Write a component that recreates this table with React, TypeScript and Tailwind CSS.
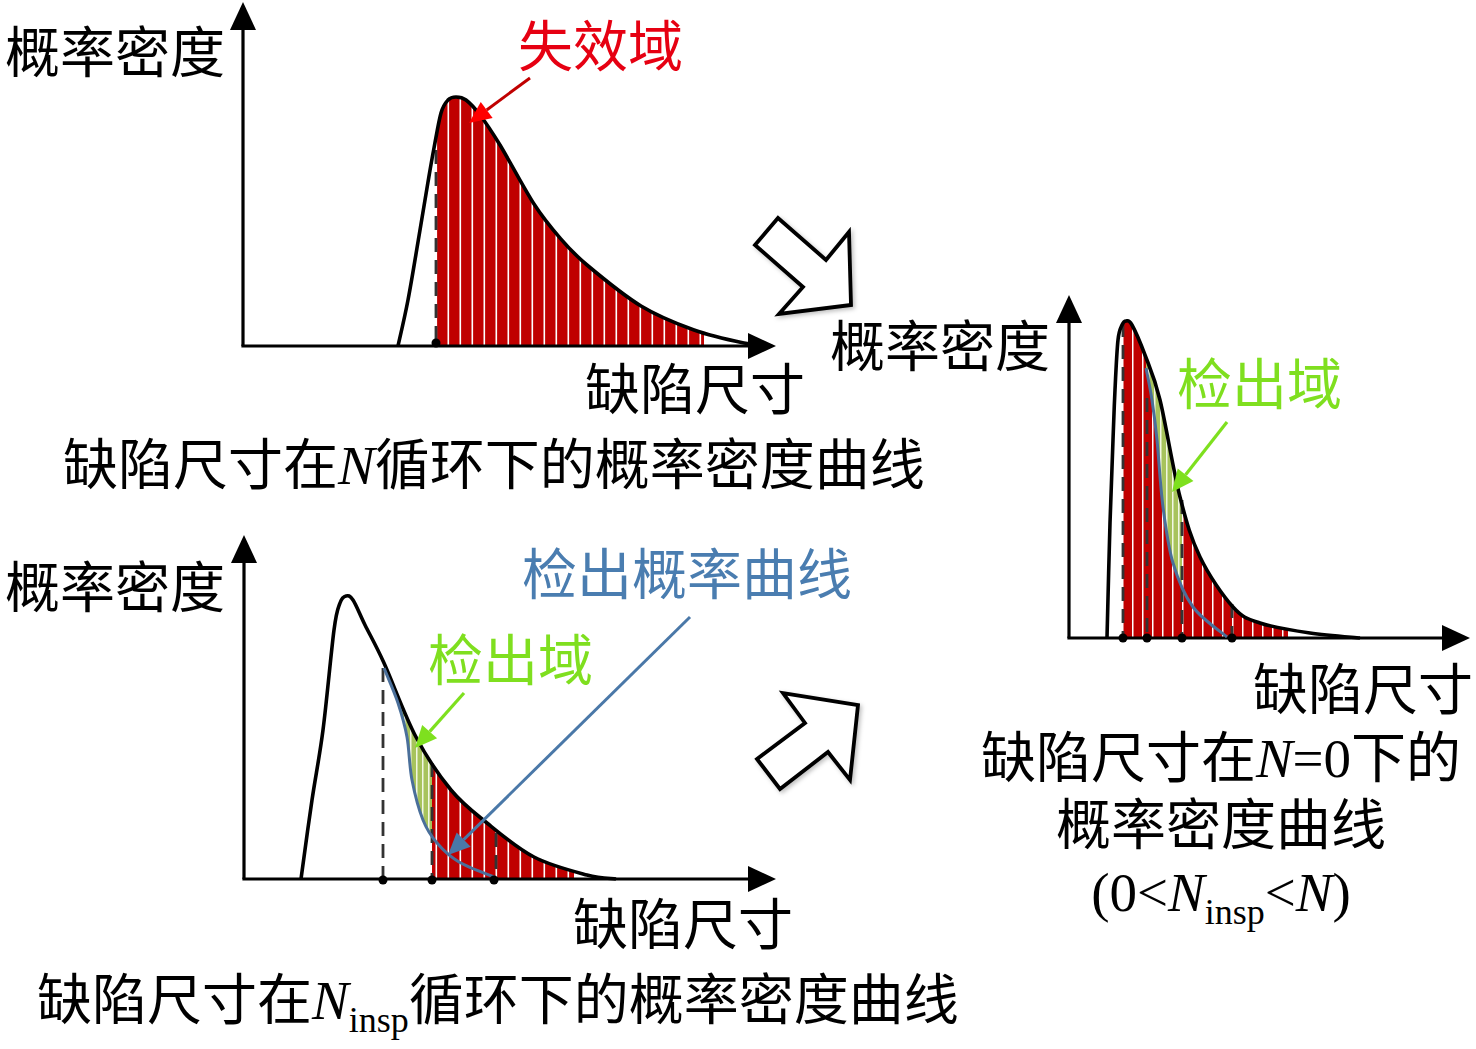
import type { ReactNode } from 'react';

type Pt = [number, number];

// catmull-rom -> cubic bezier
function smooth(pts: Pt[]) {
    let d = `M${pts[0][0]},${pts[0][1]}`;
    for (let i = 0; i < pts.length - 1; i++) {
        const p0 = pts[i - 1] || pts[i];
        const p1 = pts[i];
        const p2 = pts[i + 1];
        const p3 = pts[i + 2] || p2;
        const c1x = p1[0] + (p2[0] - p0[0]) / 6;
        const c1y = p1[1] + (p2[1] - p0[1]) / 6;
        const c2x = p2[0] - (p3[0] - p1[0]) / 6;
        const c2y = p2[1] - (p3[1] - p1[1]) / 6;
        d += ` C${c1x.toFixed(1)},${c1y.toFixed(1)} ${c2x.toFixed(1)},${c2y.toFixed(1)} ${p2[0]},${p2[1]}`;
    }
    return d;
}

function area(pts: Pt[], axisY: number) {
    const last = pts[pts.length - 1];
    return `${smooth(pts)} L${last[0]},${axisY} L${pts[0][0]},${axisY} Z`;
}

function aboveCurve(pts: Pt[], right: number, top: number) {
    const last = pts[pts.length - 1];
    return `${smooth(pts)} L${right},${last[1]} L${right},${top} L${pts[0][0]},${top} Z`;
}

const curve1: Pt[] = [[398, 346], [408, 300], [419, 236], [428, 182], [434, 148], [441, 113], [448, 100], [456, 97], [466, 100], [480, 115], [500, 145], [534, 204], [560, 238], [587, 265], [641, 306], [694, 330], [744, 343], [772, 346]];
const curve2: Pt[] = [[1107, 638], [1110, 523], [1113, 440], [1115, 390], [1118, 340], [1122, 325], [1126, 321], [1132, 325], [1145, 355], [1160, 400], [1180, 497], [1200, 557], [1233, 607], [1260, 623], [1310, 633], [1360, 638]];
const blue2: Pt[] = [[1146, 368], [1152, 400], [1157, 440], [1163, 507], [1173, 563], [1193, 607], [1227, 637]];
const curve3: Pt[] = [[301, 879], [312, 800], [323, 730], [334, 630], [340, 603], [346, 596], [353, 600], [365, 625], [384, 663], [416, 737], [451, 790], [487, 823], [534, 857], [587, 875], [616, 879]];
const blue3: Pt[] = [[384, 668], [398, 703], [407, 737], [412, 780], [423, 820], [437, 843], [459, 862], [494, 877]];

function Axes({ x, y, top, right }: { x: number; y: number; top: number; right: number }) {
    return (
        <g>
            <line x1={x} y1={top + 24} x2={x} y2={y} stroke="black" strokeWidth={3.2} />
            <line x1={x - 1.6} y1={y} x2={right - 24} y2={y} stroke="black" strokeWidth={3.2} />
            <polygon points={`${x},${top} ${x - 13},${top + 28} ${x + 13},${top + 28}`} fill="black" />
            <polygon points={`${right},${y} ${right - 28},${y - 13} ${right - 28},${y + 13}`} fill="black" />
        </g>
    );
}

function Pointer({ x1, y1, x2, y2, line, head, w = 3 }: { x1: number; y1: number; x2: number; y2: number; line: string; head: string; w?: number }) {
    const a = Math.atan2(y2 - y1, x2 - x1);
    const L = 22;
    const W = 10;
    const bx = x2 - Math.cos(a) * L;
    const by = y2 - Math.sin(a) * L;
    const px = -Math.sin(a) * W;
    const py = Math.cos(a) * W;
    return (
        <g>
            <line x1={x1} y1={y1} x2={bx} y2={by} stroke={line} strokeWidth={w} />
            <polygon points={`${x2},${y2} ${bx + px},${by + py} ${bx - px},${by - py}`} fill={head} />
        </g>
    );
}

function Dashed({ x, y1, y2 }: { x: number; y1: number; y2: number }) {
    return <line x1={x} y1={y1} x2={x} y2={y2} stroke="#333" strokeWidth={2.8} strokeDasharray="14 8" />;
}

function Dots({ xs, y }: { xs: number[]; y: number }) {
    return <g>{xs.map((x) => <circle key={x} cx={x} cy={y} r={4.5} fill="black" />)}</g>;
}

function Label({ className, children }: { className: string; children: ReactNode }) {
    return <div className={`absolute whitespace-nowrap leading-none ${className}`}>{children}</div>;
}

function N() {
    return <i className="italic">N</i>;
}

function Insp() {
    return <span className="relative top-[13px] text-[36px]">insp</span>;
}

export default function App() {
    return (
        <div className="relative h-[1049px] w-[1476px] overflow-hidden bg-white font-['Liberation_Serif','Noto_Sans_CJK_SC',serif] text-[55px] text-black">
            <svg className="absolute inset-0" width={1476} height={1049} viewBox="0 0 1476 1049">
                <defs>
                    <pattern id="red12" patternUnits="userSpaceOnUse" width={12} height={10} x={0}>
                        <rect width={12} height={10} fill="#c00000" />
                        <rect x={3.5} width={1.6} height={10} fill="#fff" />
                    </pattern>
                    <pattern id="red10" patternUnits="userSpaceOnUse" width={10} height={10} x={0}>
                        <rect width={10} height={10} fill="#c00000" />
                        <rect x={2} width={1.5} height={10} fill="#fff" />
                    </pattern>
                    <pattern id="green6" patternUnits="userSpaceOnUse" width={6} height={10}>
                        <rect width={6} height={10} fill="#a7c35c" />
                        <rect x={2} width={1.5} height={10} fill="#f2f7e4" />
                    </pattern>
                    <clipPath id="area1"><path d={area(curve1, 346)} /></clipPath>
                    <clipPath id="area2"><path d={area(curve2, 638)} /></clipPath>
                    <clipPath id="area3"><path d={area(curve3, 879)} /></clipPath>
                    <clipPath id="above2"><path d={aboveCurve(blue2, 1300, 300)} /></clipPath>
                    <clipPath id="above3"><path d={aboveCurve(blue3, 560, 600)} /></clipPath>
                    <filter id="shade" x="-20%" y="-20%" width="140%" height="140%">
                        <feDropShadow dx={2} dy={2} stdDeviation={2} floodColor="#000" floodOpacity={0.25} />
                    </filter>
                </defs>

                {/* plot 1 */}
                <g clipPath="url(#area1)">
                    <rect x={436} y={90} width={268} height={260} fill="url(#red12)" />
                </g>
                <Dashed x={436} y1={150} y2={346} />
                <Axes x={243} y={346} top={2} right={776} />
                <path d={smooth(curve1)} fill="none" stroke="black" strokeWidth={3.6} />
                <Dots xs={[436]} y={343} />
                <Pointer x1={530} y1={78} x2={469} y2={123} line="#c00000" head="#ff0000" />

                {/* plot 2 */}
                <g clipPath="url(#area2)">
                    <rect x={1123} y={310} width={165} height={330} fill="url(#red10)" />
                    <g clipPath="url(#above2)">
                        <rect x={1146} y={310} width={36} height={330} fill="url(#green6)" />
                    </g>
                </g>
                <Dashed x={1123} y1={323} y2={638} />
                <Dashed x={1147} y1={398} y2={638} />
                <Dashed x={1182} y1={500} y2={638} />
                <Dashed x={1232} y1={604} y2={638} />
                <Axes x={1069} y={638} top={295} right={1470} />
                <path d={smooth(curve2)} fill="none" stroke="black" strokeWidth={3.6} />
                <path d={smooth(blue2)} fill="none" stroke="#4a6f9a" strokeWidth={3} />
                <Dots xs={[1123, 1147, 1182, 1232]} y={638} />
                <Pointer x1={1227} y1={422} x2={1172} y2={492} line="#7ee01e" head="#7ee01e" w={3.2} />

                {/* plot 3 */}
                <g clipPath="url(#area3)">
                    <rect x={432} y={600} width={142} height={280} fill="url(#red12)" />
                    <g clipPath="url(#above3)">
                        <rect x={384} y={600} width={48} height={280} fill="url(#green6)" />
                    </g>
                </g>
                <Dashed x={383} y1={668} y2={879} />
                <Dashed x={432} y1={763} y2={879} />
                <Dashed x={496} y1={833} y2={879} />
                <Axes x={244} y={879} top={535} right={776} />
                <path d={smooth(curve3)} fill="none" stroke="black" strokeWidth={3.6} />
                <path d={smooth(blue3)} fill="none" stroke="#4a6f9a" strokeWidth={3} />
                <Dots xs={[383, 432, 494]} y={880} />
                <Pointer x1={464} y1={693} x2={415} y2={748} line="#7ee01e" head="#7ee01e" w={3.2} />
                <Pointer x1={690} y1={617} x2={448} y2={855} line="#4a78a8" head="#4a78a8" w={3} />

                {/* transition arrows */}
                <polygon
                    points="755,245 778,218 826,260 849,232 851,305 779,314 803,287"
                    fill="white" stroke="black" strokeWidth={3.8} strokeLinejoin="miter" filter="url(#shade)"
                />
                <polygon
                    points="757,759 805,723 783,693 858,705 850,780 828,752 780,789"
                    fill="white" stroke="black" strokeWidth={3.8} strokeLinejoin="miter" filter="url(#shade)"
                />
            </svg>

            <Label className="left-[5px] top-[26px]">概率密度</Label>
            <Label className="left-[518px] top-[20px] text-[#e60012]">失效域</Label>
            <Label className="left-[585px] top-[363px]">缺陷尺寸</Label>
            <Label className="left-[63px] top-[438px]">缺陷尺寸在<N />循环下的概率密度曲线</Label>

            <Label className="left-[830px] top-[320px]">概率密度</Label>
            <Label className="left-[1177px] top-[358px] text-[#7fdf1f]">检出域</Label>
            <Label className="left-[1253px] top-[663px]">缺陷尺寸</Label>
            <div className="absolute left-[961px] top-[731px] flex w-[520px] flex-col items-center gap-[12px] leading-none">
                <div className="whitespace-nowrap">缺陷尺寸在<N />=0下的</div>
                <div className="whitespace-nowrap">概率密度曲线</div>
                <div className="whitespace-nowrap">(0&lt;<N /><Insp />&lt;<N />)</div>
            </div>

            <Label className="left-[5px] top-[561px]">概率密度</Label>
            <Label className="left-[522px] top-[548px] text-[#4a7db0]">检出概率曲线</Label>
            <Label className="left-[428px] top-[634px] text-[#7fdf1f]">检出域</Label>
            <Label className="left-[573px] top-[898px]">缺陷尺寸</Label>
            <Label className="left-[37px] top-[973px]">缺陷尺寸在<N /><Insp />循环下的概率密度曲线</Label>
        </div>
    );
}
